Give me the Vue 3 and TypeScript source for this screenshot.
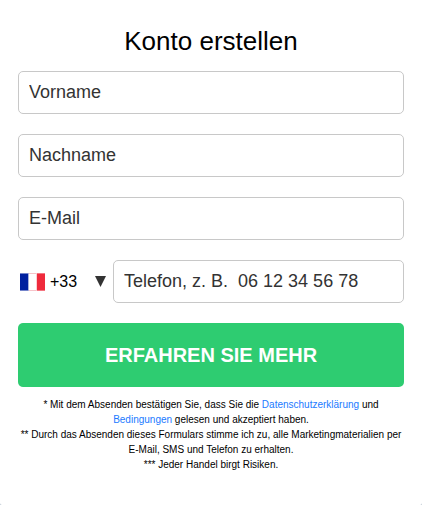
<script setup lang="ts">
import { reactive } from 'vue'

type TextField = { key: 'firstName' | 'lastName' | 'email'; type: string; label: string }

const fields: TextField[] = [
  { key: 'firstName', type: 'text', label: 'Vorname' },
  { key: 'lastName', type: 'text', label: 'Nachname' },
  { key: 'email', type: 'email', label: 'E-Mail' },
]

const form = reactive({ firstName: '', lastName: '', email: '', phone: '' })
const phonePlaceholder = 'Telefon, z. B.\u00a0 06 12 34 56 78'
</script>

<template>
  <form class="card" @submit.prevent>
    <h1 class="title">Konto erstellen</h1>
    <input
      v-for="field in fields"
      :key="field.key"
      v-model="form[field.key]"
      class="input"
      :type="field.type"
      :placeholder="field.label"
    />
    <div class="phone">
      <button class="country" type="button">
        <svg class="flag" width="25" height="18" viewBox="0 0 25 18">
          <rect width="25" height="18" fill="#fff" />
          <path d="M9 .5h8M9 17.5h8" stroke="#f7c3c9" />
          <rect width="8" height="18" fill="#00209f" />
          <rect x="8" width="1" height="18" fill="#a6b0dc" />
          <rect x="16" width="1" height="18" fill="#fbd0d5" />
          <rect x="17" width="8" height="18" fill="#ef2b3c" />
          <path d="M0 .5h8M0 17.5h8" stroke="#fff" stroke-opacity=".45" />
          <path d="M17 .5h8M17 17.5h8" stroke="#fff" stroke-opacity=".35" />
        </svg>
        <span class="code">+33</span>
        <svg class="arrow" width="11" height="11" viewBox="0 0 11 11">
          <path d="M0 0h11L5.5 11z" fill="#333" />
        </svg>
      </button>
      <input v-model="form.phone" class="input" type="tel" :placeholder="phonePlaceholder" />
    </div>
    <button class="submit" type="submit">ERFAHREN SIE MEHR</button>
    <div class="legal">
      <p>
        * Mit dem Absenden bestätigen Sie, dass Sie die <a href="#">Datenschutzerklärung</a> und<br />
        <a href="#">Bedingungen</a> gelesen und akzeptiert haben.
      </p>
      <p>
        ** Durch das Absenden dieses Formulars stimme ich zu, alle Marketingmaterialien per<br />
        E-Mail, SMS und Telefon zu erhalten.
      </p>
      <p>*** Jeder Handel birgt Risiken.</p>
    </div>
  </form>
</template>

<style>
body {
  background: #b9c4cf;
}
</style>

<style scoped>
.card {
  box-sizing: border-box;
  height: 505px;
  padding: 25px 18px 0;
  border-radius: 0 0 2px 2px;
  background: #fff;
  color: #000;
  font-family: "Liberation Sans", Arial, sans-serif;
}
.title {
  margin: 0 0 14px;
  font-size: 26px;
  font-weight: 400;
  line-height: 32px;
  text-align: center;
}
.input {
  display: block;
  box-sizing: border-box;
  width: 100%;
  height: 43px;
  margin: 0 0 20px;
  padding: 0 10px 1px;
  border: 1px solid #c8c8c8;
  border-radius: 5px;
  outline: none;
  background: #fff;
  color: #333;
  font-family: inherit;
  font-size: 18px;
}
.input::placeholder {
  color: #333;
  opacity: 1;
}
.phone {
  display: flex;
  margin-bottom: 20px;
}
.phone .input {
  flex: 1;
  min-width: 0;
  margin: 0;
}
.country {
  display: flex;
  align-items: center;
  width: 95px;
  height: 43px;
  padding: 0 7px 0 2px;
  border: 0;
  background: none;
  color: #000;
  font-family: inherit;
  font-size: 16px;
}
.flag {
  flex: none;
  margin-top: 1px;
}
.code {
  margin-left: 5px;
}
.arrow {
  flex: none;
  margin-left: auto;
}
.submit {
  display: block;
  width: 100%;
  height: 64px;
  padding: 0;
  border: 0;
  border-radius: 5px;
  background: #2ecc71;
  color: #fff;
  font-family: inherit;
  font-size: 20px;
  font-weight: 700;
}
.legal {
  margin: 10px -10px 0;
  font-size: 10px;
  line-height: 15px;
  text-align: center;
  white-space: nowrap;
}
.legal p {
  margin: 0;
}
.legal a {
  color: #217aff;
  text-decoration: none;
}
</style>
